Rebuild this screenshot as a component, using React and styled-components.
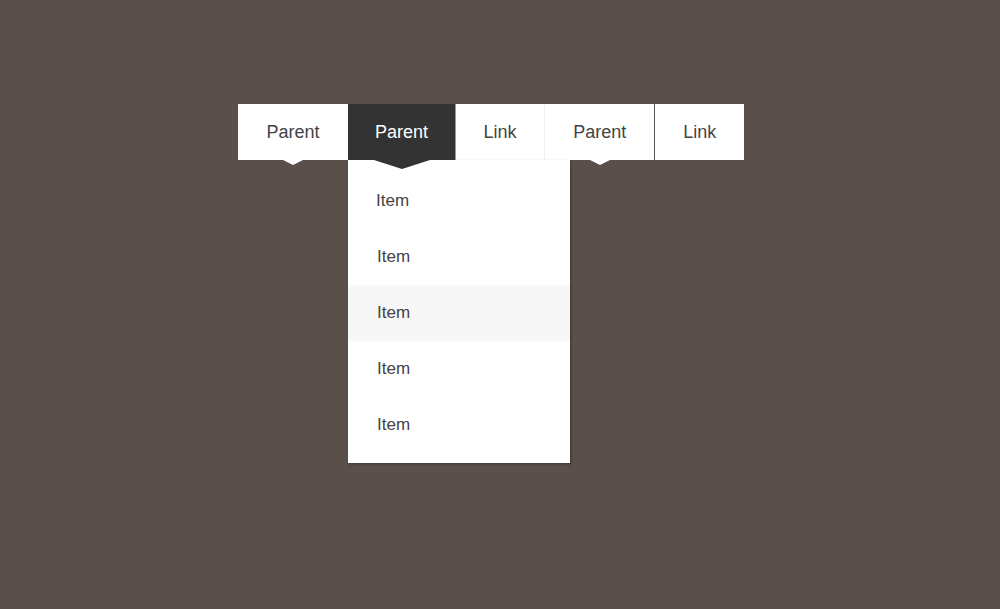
import React from 'react';
import styled, { createGlobalStyle } from 'styled-components';

const GlobalStyle = createGlobalStyle`
  html, body {
    margin: 0;
    padding: 0;
    background: #5a4f4a;
  }

  body {
    font-family: "Liberation Sans", Arial, sans-serif;
  }
`;

const Page = styled.div`
  width: 1000px;
  height: 609px;
  padding: 104px 0 0 238px;
  box-sizing: border-box;
  background: #5a4f4a;
`;

const Nav = styled.ul`
  display: flex;
  list-style: none;
  margin: 0;
  padding: 0;
`;

const NavItem = styled.li`
  position: relative;
  height: 56px;
  line-height: 56px;
  padding: 0 ${p => p.$pad || 28}px;
  font-size: 18px;
  color: ${p => (p.$active ? '#fff' : '#444')};
  background: ${p => (p.$active ? '#333' : '#fff')};
  border-left: ${p => (p.$sep ? `1px solid ${p.$sep}` : 'none')};
  cursor: pointer;

  ${p =>
    p.$arrow &&
    `
    &::after {
      content: '';
      position: absolute;
      left: 50%;
      top: 56px;
      transform: translateX(-50%);
      border-left: ${p.$active ? 28 : 10}px solid transparent;
      border-right: ${p.$active ? 28 : 10}px solid transparent;
      border-top: ${p.$active ? 9 : 5}px solid ${p.$active ? '#333' : '#fff'};
      z-index: 2;
    }
  `}
`;

const Dropdown = styled.ul`
  position: absolute;
  top: 56px;
  left: 0;
  width: 222px;
  margin: 0;
  padding: 13px 0 10px;
  list-style: none;
  background: #fff;
  box-shadow: 1px 1px 2px rgba(0, 0, 0, 0.35);
  z-index: 1;
`;

const DropItem = styled.li`
  height: 56px;
  line-height: 56px;
  padding-left: ${p => (p.$first ? 28 : 29)}px;
  font-size: 17px;
  color: #444;
  background: ${p => (p.$hover ? '#f7f7f7' : '#fff')};
`;

const items = ['Item', 'Item', 'Item', 'Item', 'Item'];

export default function App() {
  return (
    <Page>
      <GlobalStyle />
      <Nav>
        <NavItem $arrow $pad={28.5}>Parent</NavItem>
        <NavItem $arrow $active $pad={27}>
          Parent
          <Dropdown>
            {items.map((it, i) => (
              <DropItem key={i} $first={i === 0} $hover={i === 2}>
                {it}
              </DropItem>
            ))}
          </Dropdown>
        </NavItem>
        <NavItem $sep="#9a9a9a" $pad={27.5}>Link</NavItem>
        <NavItem $arrow $sep="#eeeeee" $pad={28}>Parent</NavItem>
        <NavItem $sep="#555" $pad={28}>Link</NavItem>
      </Nav>
    </Page>
  );
}
